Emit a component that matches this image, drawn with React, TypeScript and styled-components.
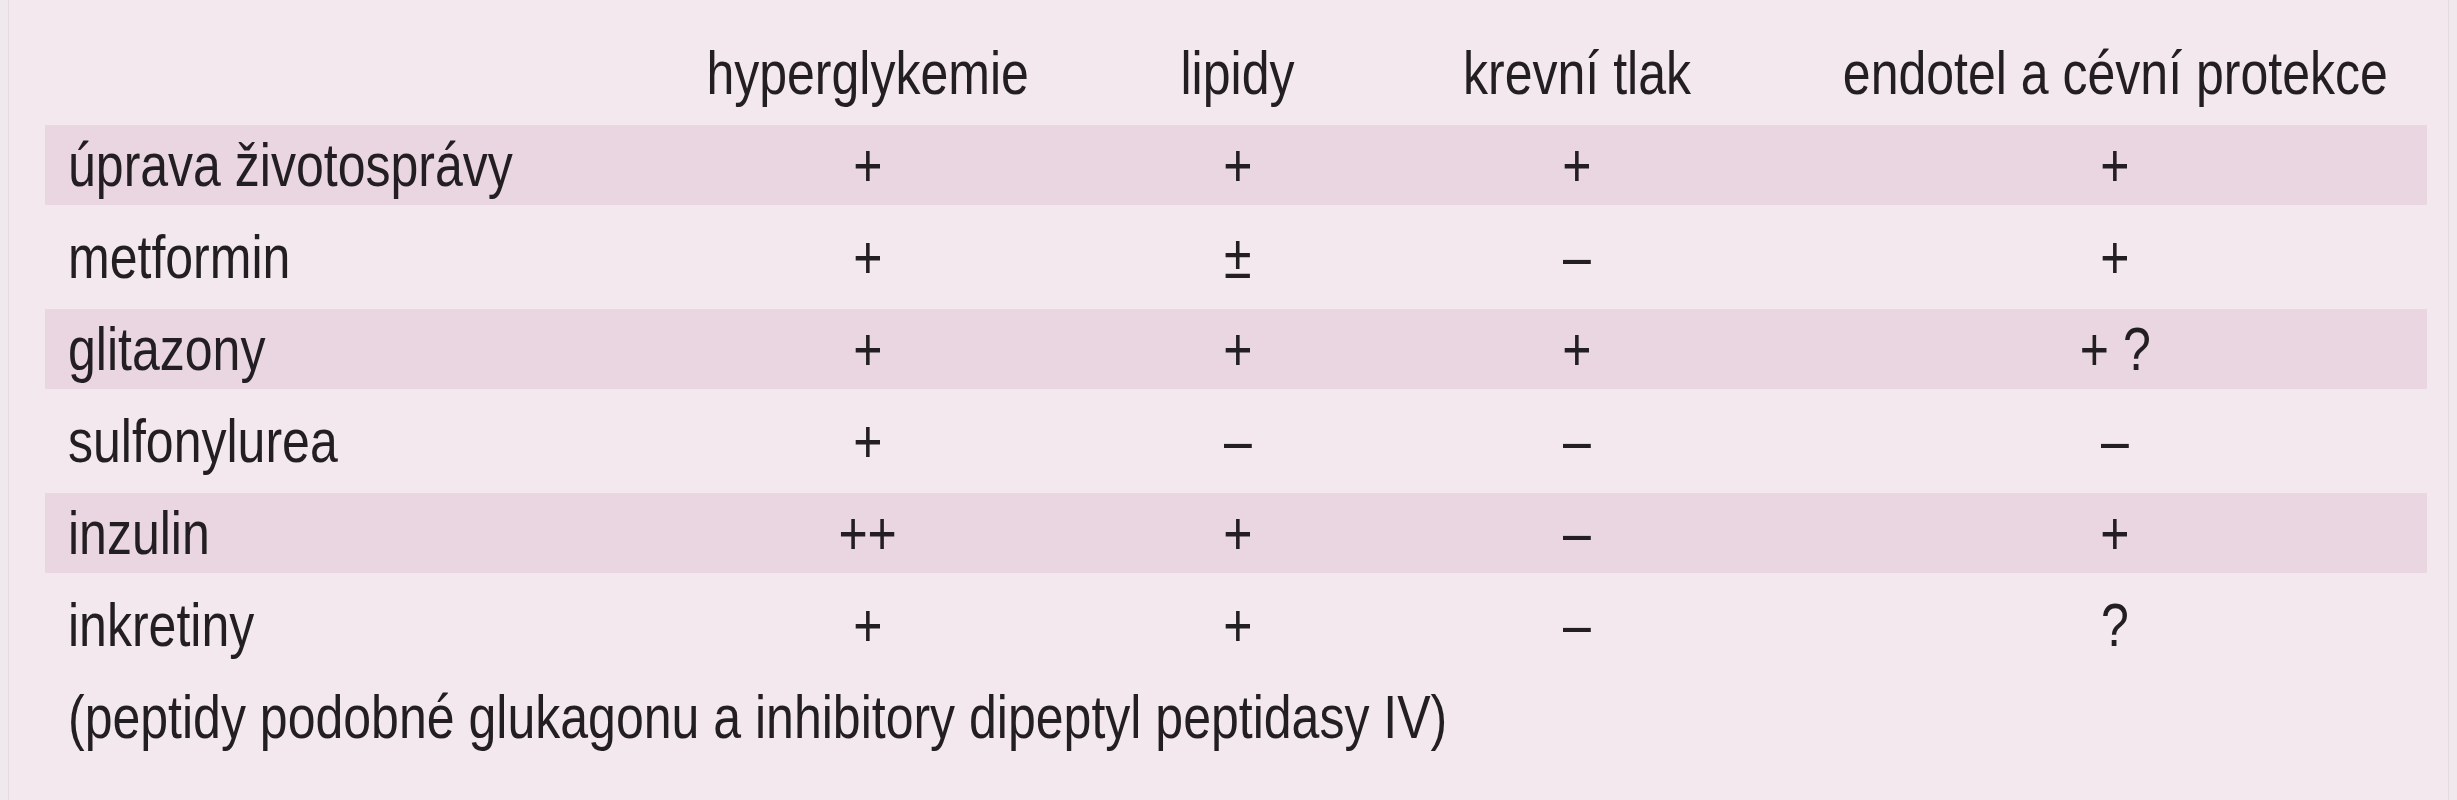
import React from "react";
import styled, { createGlobalStyle } from "styled-components";

const GlobalStyle = createGlobalStyle`
  html, body {
    margin: 0;
    padding: 0;
    background: #efe9ee;
    overflow: hidden;
  }
`;

const columns = ["hyperglykemie", "lipidy", "krevní tlak", "endotel a cévní protekce"];

const rows: { label: string; values: string[] }[] = [
  { label: "úprava životosprávy", values: ["+", "+", "+", "+"] },
  { label: "metformin", values: ["+", "±", "–", "+"] },
  { label: "glitazony", values: ["+", "+", "+", "+ ?"] },
  { label: "sulfonylurea", values: ["+", "–", "–", "–"] },
  { label: "inzulin", values: ["++", "+", "–", "+"] },
  { label: "inkretiny", values: ["+", "+", "–", "?"] },
];

export default function App() {
  return (
    <>
      <GlobalStyle />
      <Page>
        <Panel>
          <Table>
            <Row>
              <LabelCell />
              {columns.map((c) => (
                <Cell key={c}>
                  <Narrow $origin="center">{c}</Narrow>
                </Cell>
              ))}
            </Row>
            {rows.map((r, i) => (
              <Row key={r.label} $shaded={i % 2 === 0}>
                <LabelCell>
                  <Narrow $origin="left">{r.label}</Narrow>
                </LabelCell>
                {r.values.map((v, j) => (
                  <Cell key={j}>
                    <Narrow $origin="center">{v}</Narrow>
                  </Cell>
                ))}
              </Row>
            ))}
            <Note>
              <Narrow $origin="left">
                (peptidy podobné glukagonu a inhibitory dipeptyl peptidasy IV)
              </Narrow>
            </Note>
          </Table>
        </Panel>
      </Page>
    </>
  );
}

const Page = styled.div`
  padding: 0 8px;
  height: 800px;
`;

const Panel = styled.div`
  box-sizing: border-box;
  min-height: 800px;
  background: #f4e8ef;
  border-left: 1px solid #e5dae1;
  border-right: 1px solid #e5dae1;
  padding: 33px 21px 0 36px;
`;

const Table = styled.div`
  display: flex;
  flex-direction: column;
  gap: 12px;
  font-family: "Liberation Sans", Arial, sans-serif;
  font-size: 61px;
  color: #221e21;
`;

const Row = styled.div<{ $shaded?: boolean }>`
  display: grid;
  grid-template-columns: 566px 514px 226px 452px 624px;
  height: 80px;
  line-height: 80px;
  background: ${(p) => (p.$shaded ? "#ead6e0" : "transparent")};
`;

const Narrow = styled.span<{ $origin: "left" | "center" }>`
  display: inline-block;
  flex: none;
  white-space: nowrap;
  transform: scaleX(0.82);
  transform-origin: ${(p) => p.$origin} center;
`;

const LabelCell = styled.div`
  padding-left: 23px;
  white-space: nowrap;
`;

const Cell = styled.div`
  display: flex;
  justify-content: center;
  min-width: 0;
`;

const Note = styled.div`
  height: 80px;
  line-height: 80px;
  padding-left: 23px;
  white-space: nowrap;
`;
